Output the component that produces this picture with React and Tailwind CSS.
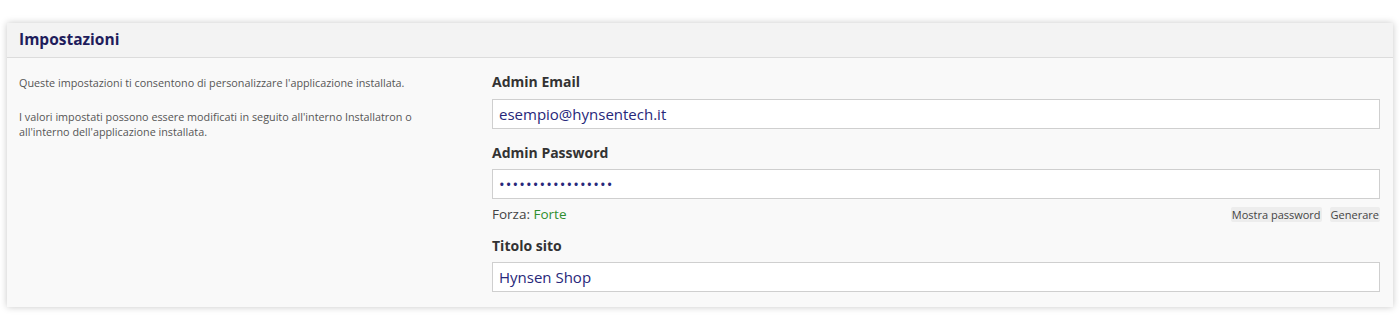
import React from 'react';

const font = { fontFamily: '"Open Sans", "Noto Sans", sans-serif' };

function Field({ label, children, className = '' }) {
  return (
    <div className={className}>
      <div className="text-[14px] leading-[20px] font-bold text-[#333]">{label}</div>
      {children}
    </div>
  );
}

function TextInput({ value, type = 'text' }) {
  return (
    <input
      type={type}
      readOnly
      value={value}
      className={
        'block w-full h-[30px] bg-white border border-[#cfcfcf] px-[6px] text-[15px] text-[#27277a] outline-none' +
        (type === 'password' ? ' tracking-[1.1px]' : '')
      }
      style={font}
    />
  );
}

export default function App() {
  return (
    <div className="min-h-[331px] bg-white pt-[23px] px-[7px]" style={font}>
      <div className="bg-[#f9f9f9] shadow-[0_0_7px_rgba(0,0,0,0.22)]">
        {/* Header */}
        <div className="h-[35px] bg-[#f3f3f3] border-b border-[#dcdcdc] px-[12px] flex items-center">
          <h2 className="text-[15.5px] font-bold text-[#1f1d5c]">Impostazioni</h2>
        </div>

        {/* Body */}
        <div className="flex pl-[12px] pr-[13px] pt-[14px] pb-[15px]">
          <div className="w-[473px] shrink-0 text-[10.8px] leading-[15px] text-[#555] pt-[3px]">
            <p>Queste impostazioni ti consentono di personalizzare l'applicazione installata.</p>
            <p className="mt-[19px] w-[405px]">
              I valori impostati possono essere modificati in seguito all'interno Installatron o all'interno dell'applicazione installata.
            </p>
          </div>

          <div className="flex-1 min-w-0">
            <Field label="Admin Email">
              <div className="mt-[7px]">
                <TextInput value="esempio@hynsentech.it" />
              </div>
            </Field>

            <Field label="Admin Password" className="mt-[14px]">
              <div className="mt-[6px]">
                <TextInput type="password" value="hynsenshop2024abc" />
              </div>
              <div className="flex items-center justify-between h-[20px] mt-[5px]">
                <span className="text-[13.5px] text-[#444]">
                  Forza: <span className="text-[#2f8f2f]">Forte</span>
                </span>
                <div className="flex items-center gap-[8px] text-[11px] text-[#444]">
                  <span className="bg-[#ededed] rounded-[2px] px-[1px] leading-[15px]">Mostra password</span>
                  <span className="bg-[#ededed] rounded-[2px] px-[1px] leading-[15px]">Generare</span>
                </div>
              </div>
            </Field>

            <Field label="Titolo sito" className="mt-[12px]">
              <div className="mt-[6px]">
                <TextInput value="Hynsen Shop" />
              </div>
            </Field>
          </div>
        </div>
      </div>
    </div>
  );
}
